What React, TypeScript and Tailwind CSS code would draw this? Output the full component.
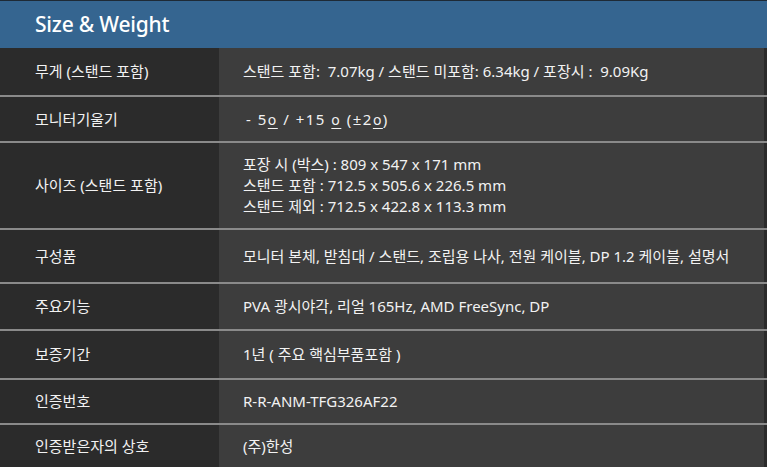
import React from "react";

const O = () => <span className="text-[14px] underline underline-offset-[3px] decoration-1">o</span>;

const rows: { label: string; value: React.ReactNode; h: string }[] = [
  { label: "무게 (스탠드 포함)", value: "스탠드 포함:  7.07kg / 스탠드 미포함: 6.34kg / 포장시 :  9.09Kg", h: "h-[47px]" },
  {
    label: "모니터기울기",
    value: (
      <span className="tracking-[1.5px] pl-[3px]">
        - 5<O /> / +15 <O /> (±2<O />)
      </span>
    ),
    h: "h-[44px]",
  },
  {
    label: "사이즈 (스탠드 포함)",
    value: (
      <div className="flex flex-col leading-[21px]">
        <span>포장 시 (박스) : 809 x 547 x 171 mm</span>
        <span>스탠드 포함 : 712.5 x 505.6 x 226.5 mm</span>
        <span>스탠드 제외 : 712.5 x 422.8 x 113.3 mm</span>
      </div>
    ),
    h: "h-[85px]",
  },
  { label: "구성품", value: "모니터 본체, 받침대 / 스탠드, 조립용 나사, 전원 케이블, DP 1.2 케이블, 설명서", h: "h-[52px]" },
  { label: "주요기능", value: "PVA 광시야각, 리얼 165Hz, AMD FreeSync, DP", h: "h-[45px]" },
  { label: "보증기간", value: "1년 ( 주요 핵심부품포함 )", h: "h-[47px]" },
  { label: "인증번호", value: "R-R-ANM-TFG326AF22", h: "h-[43px]" },
  { label: "인증받은자의 상호", value: "(주)한성", h: "h-[42px]" },
];

export default function App() {
  return (
    <div
      className="w-[767px] h-[467px] bg-[#2b2b2b] text-[#f2f2f2] overflow-hidden"
      style={{ fontFamily: '"Noto Sans", "Noto Sans CJK KR", sans-serif' }}
    >
      <div className="h-[48px] bg-[#356590] border-t border-[#1e2a36] flex items-center pl-[35px]">
        <span className="text-[21px] font-medium text-white tracking-[-0.2px]">Size &amp; Weight</span>
      </div>
      {rows.map((r, i) => (
        <div key={i} className={`flex ${i > 0 ? "border-t-2 border-[#8a8a8a]" : ""}`}>
          <div className={`w-[219px] ${r.h} bg-[#2b2b2b] flex items-center pl-[35px] text-[15px] shrink-0`}>
            {r.label}
          </div>
          <div className={`flex-1 ${r.h} bg-[#3d3d3d] flex items-center pl-[24px] text-[15px] whitespace-pre border-r-[3px] border-[#2b2b2b]`}>
            {r.value}
          </div>
        </div>
      ))}
    </div>
  );
}
